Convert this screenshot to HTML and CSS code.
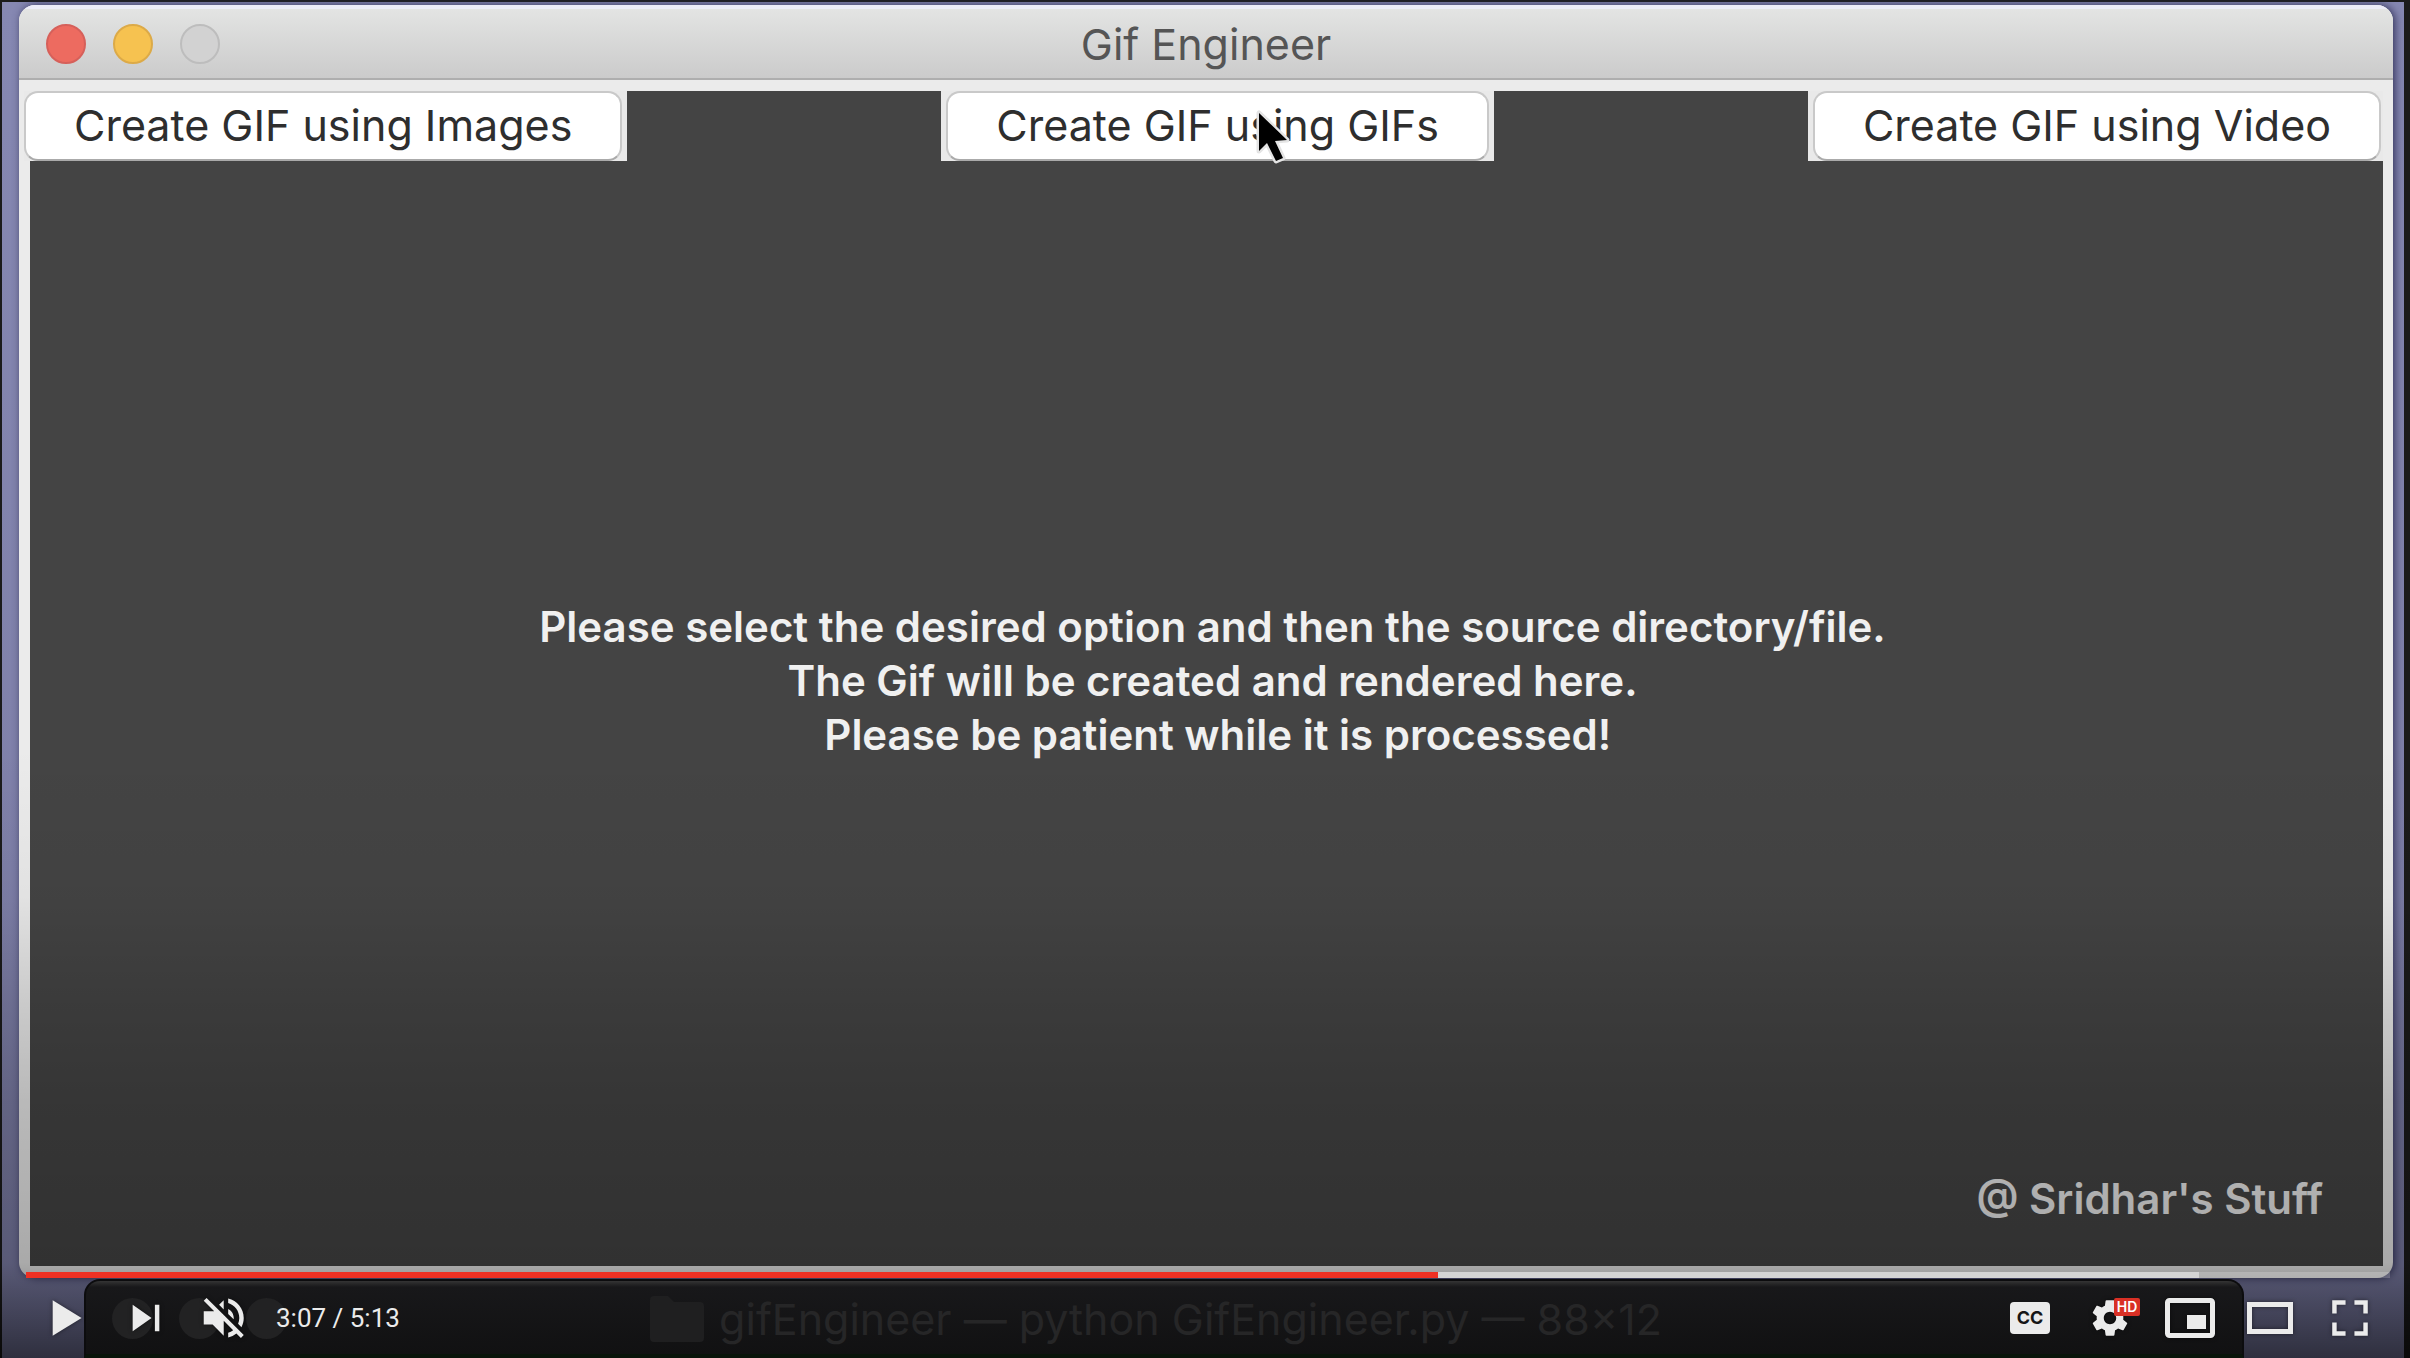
FILE: index.html
```html
<!DOCTYPE html>
<html lang="en">
<head>
<meta charset="utf-8">
<title>Gif Engineer</title>
<link rel="stylesheet" href="styles.css">
</head>
<body>
<main class="player">
  <section class="window">
    <header class="titlebar">
      <div class="lights"><span class="light close"></span><span class="light minimise"></span><span class="light zoom"></span></div>
      <h1 class="title">Gif Engineer</h1>
    </header>
    <div class="content">
      <div class="canvas">
        <nav class="options">
          <div class="slot first"><button class="option" type="button">Create GIF using Images</button></div>
          <div class="slot"><button class="option" type="button">Create GIF using GIFs</button>
            <svg class="cursor" viewBox="0 0 38 58" aria-hidden="true"><path d="M3 3V41L11 33L20 51L27 48L19 31L31 30Z" fill="#000" stroke="#e4e4e4" stroke-width="5" stroke-linejoin="round" paint-order="stroke"/></svg>
          </div>
          <div class="slot last"><button class="option" type="button">Create GIF using Video</button></div>
        </nav>
        <p class="message">Please select the desired option and then the source directory/file.<br>The Gif will be created and rendered here.<br>&nbsp;Please be patient while it is processed!</p>
        <p class="credit">@ Sridhar's Stuff</p>
      </div>
    </div>
  </section>
  <div class="shade"></div>
  <div class="progress"><div class="buffered" style="width:91.92%"></div><div class="played" style="width:59.73%"></div></div>
  <footer class="bar">
    <div class="terminal">
      <div class="dots"><span class="dot"></span><span class="dot"></span><span class="dot"></span></div>
      <span class="terminal-title"><svg class="folder" viewBox="0 0 54 46" aria-hidden="true"><path d="M0 4Q0 0 4 0H18L24 6H50Q54 6 54 10V42Q54 46 50 46H4Q0 46 0 42Z" fill="#1f1f20"/></svg>gifEngineer — python GifEngineer.py — 88×12</span>
    </div>
    <div class="controls">
      <button class="control" type="button" aria-label="Play"><svg viewBox="0 0 36 36"><path d="M12 26L25 18L12 10Z"/></svg></button>
      <button class="control" type="button" aria-label="Next"><svg viewBox="0 0 36 36"><path d="M12 24L20.5 18L12 12ZM22 12V24H24V12Z"/></svg></button>
      <button class="control" type="button" aria-label="Unmute"><svg viewBox="0 0 36 36"><path d="m 21.48,17.98 c 0,-1.77 -1.02,-3.29 -2.5,-4.03 v 2.21 l 2.45,2.45 c .03,-0.2 .05,-0.41 .05,-0.63 z m 2.5,0 c 0,.94 -0.2,1.82 -0.54,2.64 l 1.51,1.51 c .66,-1.24 1.03,-2.65 1.03,-4.15 0,-4.28 -2.99,-7.86 -7,-8.76 v 2.05 c 2.89,.86 5,3.54 5,6.71 z M 9.25,8.98 l -1.27,1.26 4.72,4.73 H 7.98 v 6 H 11.98 l 5,5 v -6.73 l 4.25,4.25 c -0.67,.52 -1.42,.93 -2.25,1.18 v 2.06 c 1.38,-0.31 2.63,-0.95 3.69,-1.81 l 2.04,2.05 1.27,-1.27 -9,-9 -7.72,-7.72 z m 7.72,.99 -2.09,2.08 2.09,2.09 V 9.98 z"/></svg></button>
      <span class="time">3:07 / 5:13</span>
      <span class="spacer"></span>
      <button class="control" type="button" aria-label="Subtitles"><span class="cc">CC</span></button>
      <button class="control" type="button" aria-label="Settings"><svg viewBox="0 0 36 36"><path d="m 23.94,18.78 c .03,-0.25 .05,-0.51 .05,-0.78 0,-0.27 -0.02,-0.52 -0.05,-0.78 l 1.68,-1.32 c .15,-0.12 .19,-0.33 .09,-0.51 l -1.6,-2.76 c -0.09,-0.17 -0.31,-0.24 -0.48,-0.17 l -1.99,.8 c -0.41,-0.32 -0.86,-0.58 -1.35,-0.78 l -0.30,-2.12 c -0.02,-0.19 -0.19,-0.33 -0.39,-0.33 l -3.2,0 c -0.2,0 -0.36,.14 -0.39,.33 l -0.30,2.12 c -0.48,.2 -0.93,.47 -1.35,.78 l -1.99,-0.8 c -0.18,-0.07 -0.39,0 -0.48,.17 l -1.6,2.76 c -0.10,.17 -0.05,.39 .09,.51 l 1.68,1.32 c -0.03,.25 -0.05,.52 -0.05,.78 0,.26 .02,.52 .05,.78 l -1.68,1.32 c -0.15,.12 -0.19,.33 -0.09,.51 l 1.6,2.76 c .09,.17 .31,.24 .48,.17 l 1.99,-0.8 c .41,.32 .86,.58 1.35,.78 l .30,2.12 c .02,.19 .19,.33 .39,.33 l 3.2,0 c .2,0 .36,-0.14 .39,-0.33 l .30,-2.12 c .48,-0.2 .93,-0.47 1.35,-0.78 l 1.99,.8 c .18,.07 .39,0 .48,-0.17 l 1.6,-2.76 c .09,-0.17 .05,-0.39 -0.09,-0.51 l -1.68,-1.32 z m -5.94,2.01 c -1.54,0 -2.8,-1.25 -2.8,-2.8 0,-1.54 1.25,-2.8 2.8,-2.8 1.54,0 2.8,1.25 2.8,2.8 0,1.54 -1.25,2.8 -2.8,2.8 z"/></svg><span class="hd">HD</span></button>
      <button class="control" type="button" aria-label="Miniplayer"><svg viewBox="0 0 80 80"><rect x="17.5" y="22.5" width="45" height="35" rx="2" fill="none" stroke="#ebebeb" stroke-width="5"/><path d="M37 37H56V51H37Z"/></svg></button>
      <button class="control" type="button" aria-label="Theater mode"><svg viewBox="0 0 80 80"><rect x="19.5" y="26.5" width="41" height="27" fill="none" stroke="#ebebeb" stroke-width="5"/></svg></button>
      <button class="control" type="button" aria-label="Full screen"><svg viewBox="0 0 36 36"><path d="M10 16H12V12H16V10H10ZM20 10V12H24V16H26V10ZM24 24H20V26H26V20H24ZM12 20H10V26H16V24H12Z"/></svg></button>
    </div>
  </footer>
</main>
</body>
</html>
```
FILE: styles.css
```css
* { box-sizing: border-box; }
body {
  margin: 0;
  background: #1b1b1b;
  font-family: Inter, "Liberation Sans", sans-serif;
}
h1, p { margin: 0; }
button { border: 0; padding: 0; font: inherit; color: inherit; background: none; }
.player {
  position: relative;
  display: flex;
  flex-direction: column;
  min-height: 100vh;
  padding: 5px 17px 0 19px;
  overflow: hidden;
  background: linear-gradient(#8688b2, #7b7ca4) 2px 2px / calc(100% - 8px) 100% no-repeat;
}
.window {
  flex: 1;
  display: flex;
  flex-direction: column;
  border-radius: 16px;
  overflow: hidden;
  background: #ebebeb;
  box-shadow: 2px 0 8px #33335a;
}
.titlebar {
  display: flex;
  align-items: center;
  height: 75px;
  padding: 0 27px;
  border-top: 4px solid #ececf8;
  border-bottom: 2px solid #aeaeae;
  background: linear-gradient(#e3e4e3, #cbcbcb);
}
.lights { display: flex; gap: 27px; flex: 1; }
.light { width: 40px; height: 40px; border-radius: 50%; border: 2px solid; }
.close { background: #ed6b60; border-color: #d6605a; }
.minimise { background: #f6c250; border-color: #dcaa48; }
.zoom { background: #d2d2d2; border-color: #bdbdbd; }
.title { font-size: 43px; line-height: 48px; font-weight: 400; color: #555; }
.titlebar::after { content: ""; flex: 1; }
.content { flex: 1; display: flex; padding: 11px 10px 12px 11px; }
.canvas {
  flex: 1;
  display: flex;
  flex-direction: column;
  justify-content: space-between;
  background: #444;
}
.options { display: flex; justify-content: space-between; margin-left: -6px; }
.slot { position: relative; height: 70px; padding: 0 5px; background: #e9e9e9; }
.first { padding-left: 0; }
.last { padding-right: 2px; }
.option {
  display: block;
  height: 70px;
  padding: 0 48px 2px;
  border: 2px solid #c9c9c9;
  border-bottom-color: #aaa;
  border-radius: 14px;
  background: #fff;
  color: #2e2e2e;
  font-size: 43px;
  line-height: 64px;
}
.cursor { position: absolute; left: 315px; top: 19px; width: 38px; height: 58px; }
.message {
  padding: 28px 0 0 12px;
  text-align: center;
  font-size: 42px;
  line-height: 54px;
  font-weight: 600;
  color: #f0f0f0;
}
.credit {
  padding: 0 60px 40px 0;
  text-align: right;
  font-size: 42px;
  line-height: 54px;
  font-weight: 600;
  color: #eaeaea;
}
.shade {
  position: absolute;
  inset: 0;
  pointer-events: none;
  background: linear-gradient(transparent 55%, rgba(0,0,0,.04) 66%, rgba(0,0,0,.14) 74%, rgba(0,0,0,.21) 81%, rgba(0,0,0,.28) 93%, rgba(0,0,0,.62));
}
.progress {
  position: relative;
  height: 6px;
  margin: -6px 3px 0 7px;
  background: rgba(255,255,255,.2);
}
.buffered, .played { position: absolute; inset: 0 auto 0 0; }
.buffered { background: #d4d4d4; }
.played { background: #ee3124; }
.bar { position: relative; height: 80px; }
.terminal {
  position: absolute;
  inset: 1px 149px 0 65px;
  display: flex;
  align-items: center;
  padding: 2px 42px 0 26px;
  border: 2px solid #0c0c0e;
  border-bottom: 4px solid #09140a;
  border-radius: 16px 16px 0 0;
  background: linear-gradient(#343434, #18181a 6px, #111112);
}
.terminal::after { content: ""; flex: 1; }
.dots { flex: 1; display: flex; gap: 26px; }
.dot { width: 41px; height: 41px; border-radius: 50%; background: #222223; }
.terminal-title {
  display: flex;
  align-items: center;
  gap: 15px;
  font-size: 43px;
  color: #262627;
  white-space: nowrap;
}
.folder { width: 54px; height: 46px; }
.controls {
  position: relative;
  display: flex;
  align-items: center;
  height: 80px;
  margin: 0 3px 0 7px;
  color: #ebebeb;
}
.control {
  position: relative;
  display: flex;
  align-items: center;
  justify-content: center;
  width: 80px;
  height: 80px;
}
.control svg { width: 80px; height: 80px; fill: #ebebeb; filter: drop-shadow(0 0 2px rgba(0,0,0,.5)); }
.time { padding-left: 10px; font: 26px/32px Roboto, sans-serif; }
.spacer { flex: 1; }
.cc {
  width: 40px;
  height: 32px;
  border-radius: 4px;
  background: #ebebeb;
  color: #161617;
  font-size: 18px;
  line-height: 32px;
  font-weight: 700;
}
.hd {
  position: absolute;
  left: 44px;
  top: 20px;
  width: 26px;
  height: 18px;
  border-radius: 2px;
  background: #d93025;
  color: #fff;
  font-size: 14px;
  line-height: 18px;
  font-weight: 600;
}
```
